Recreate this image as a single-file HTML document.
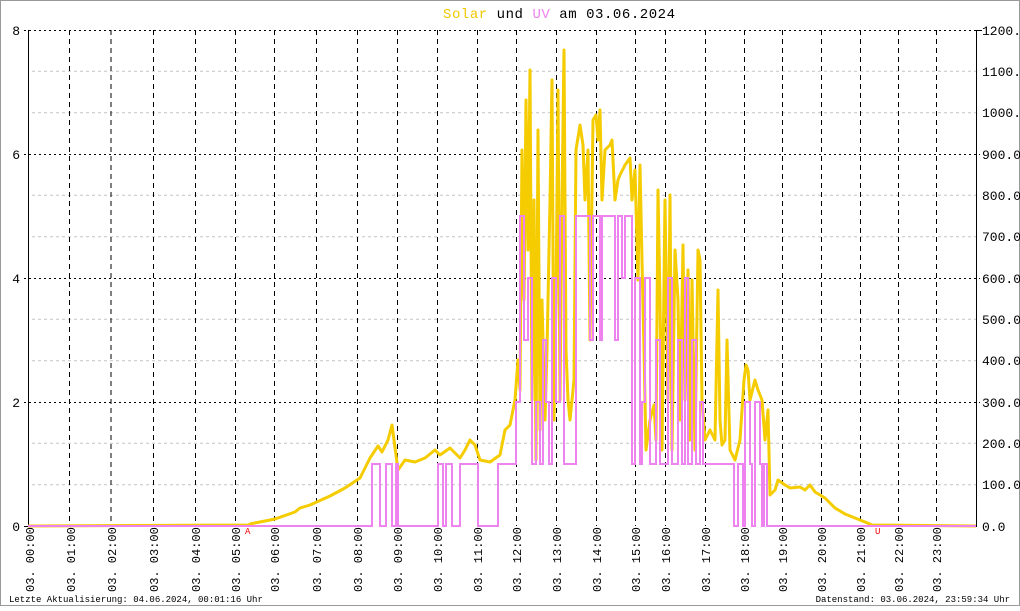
<!DOCTYPE html><html><head><style>
body{margin:0;width:1020px;height:606px;background:#fff;overflow:hidden}
svg text{font-family:"Liberation Mono",monospace}
</style></head><body>
<svg width="1020" height="606" xmlns="http://www.w3.org/2000/svg">
<rect x="0.5" y="0.5" width="1019" height="605" fill="#fff" stroke="#999"/>
<text x="443" y="18" font-size="14" textLength="232" lengthAdjust="spacing"><tspan fill="#f0c800">Solar</tspan> und <tspan fill="#ee82ee">UV</tspan> am 03.06.2024</text>
<g stroke="#c4c4c4" stroke-dasharray="3,3">
<line x1="32" y1="71.3" x2="976" y2="71.3"/><line x1="32" y1="112.7" x2="976" y2="112.7"/><line x1="32" y1="195.3" x2="976" y2="195.3"/><line x1="32" y1="236.7" x2="976" y2="236.7"/><line x1="32" y1="319.3" x2="976" y2="319.3"/><line x1="32" y1="360.7" x2="976" y2="360.7"/><line x1="32" y1="443.3" x2="976" y2="443.3"/><line x1="32" y1="484.7" x2="976" y2="484.7"/>
</g>
<g stroke="#000" stroke-dasharray="2,3">
<line x1="24" y1="30.5" x2="980" y2="30.5"/><line x1="24" y1="154.5" x2="980" y2="154.5"/><line x1="24" y1="278.5" x2="980" y2="278.5"/><line x1="24" y1="402.5" x2="980" y2="402.5"/>
</g>
<g stroke="#000" stroke-dasharray="5,4">
<line x1="69.5" y1="30" x2="69.5" y2="526"/><line x1="111" y1="30" x2="111" y2="526"/><line x1="153.5" y1="30" x2="153.5" y2="526"/><line x1="195.5" y1="30" x2="195.5" y2="526"/><line x1="235.5" y1="30" x2="235.5" y2="526"/><line x1="274.5" y1="30" x2="274.5" y2="526"/><line x1="316.5" y1="30" x2="316.5" y2="526"/><line x1="357.5" y1="30" x2="357.5" y2="526"/><line x1="397.5" y1="30" x2="397.5" y2="526"/><line x1="437.5" y1="30" x2="437.5" y2="526"/><line x1="477.5" y1="30" x2="477.5" y2="526"/><line x1="516.5" y1="30" x2="516.5" y2="526"/><line x1="556.5" y1="30" x2="556.5" y2="526"/><line x1="596.5" y1="30" x2="596.5" y2="526"/><line x1="635.5" y1="30" x2="635.5" y2="526"/><line x1="665.5" y1="30" x2="665.5" y2="526"/><line x1="705.5" y1="30" x2="705.5" y2="526"/><line x1="744.5" y1="30" x2="744.5" y2="526"/><line x1="782.5" y1="30" x2="782.5" y2="526"/><line x1="821.5" y1="30" x2="821.5" y2="526"/><line x1="860.5" y1="30" x2="860.5" y2="526"/><line x1="898.5" y1="30" x2="898.5" y2="526"/><line x1="936.5" y1="30" x2="936.5" y2="526"/>
</g>
<line x1="28.5" y1="30" x2="28.5" y2="527" stroke="#000"/>
<line x1="976.5" y1="30" x2="976.5" y2="527" stroke="#000"/>
<g stroke="#000"><line x1="24" y1="526.5" x2="28" y2="526.5"/><line x1="976" y1="30.5" x2="982" y2="30.5"/></g>
<g font-size="13" fill="#000" text-anchor="end"><text x="20" y="35">8</text><text x="20" y="159">6</text><text x="20" y="283">4</text><text x="20" y="407">2</text><text x="20" y="531">0</text></g>
<g font-size="13" fill="#000"><text x="982" y="35">1200.0</text><text x="982" y="76">1100.0</text><text x="982" y="117">1000.0</text><text x="982" y="159">900.0</text><text x="982" y="200">800.0</text><text x="982" y="241">700.0</text><text x="982" y="283">600.0</text><text x="982" y="324">500.0</text><text x="982" y="365">400.0</text><text x="982" y="407">300.0</text><text x="982" y="448">200.0</text><text x="982" y="489">100.0</text><text x="982" y="531">0.0</text></g>
<polyline fill="none" stroke="#f5cc00" stroke-width="3" stroke-linejoin="round" points="28,526 250,525 250,524 275,519 295,512 300,508 310,505 330,496 345,488 360,478 370,458 378,446 382,452 388,440 392,425 398,470 405,460 415,462 425,458 435,450 440,455 450,448 460,458 465,450 470,440 475,445 480,460 490,462 500,455 505,430 510,425 515,400 518,360 520,390 522,150 524,300 526,100 528,250 530,70 532,400 534,200 536,460 538,130 540,430 542,300 545,420 547,350 550,200 552,80 554,420 556,300 558,90 560,400 562,200 564,50 566,350 568,400 570,420 574,380 576,150 580,125 583,145 585,200 588,150 590,340 593,120 596,115 598,140 600,110 602,200 605,150 610,145 612,140 615,200 618,180 620,175 625,165 630,158 632,200 635,170 638,280 640,165 642,260 644,350 646,450 650,420 654,405 656,440 658,190 660,300 662,450 665,200 668,400 670,195 672,450 675,250 678,300 680,420 683,245 685,400 688,270 690,440 692,280 695,450 698,250 700,260 702,400 705,440 710,430 715,440 718,290 720,420 722,445 725,440 727,340 730,450 735,460 740,440 744,380 746,365 748,370 750,400 755,380 758,390 762,400 765,440 768,410 770,495 775,490 778,480 785,485 790,488 800,487 805,490 810,485 815,492 825,498 835,508 845,514 855,518 865,522 872,525 976,526"/>
<polyline fill="none" stroke="#ee82ee" stroke-width="2" points="28,526 372,526 372,464 380,464 380,526 386,526 386,464 392,464 392,526 396,526 396,464 398,464 398,526 438,526 438,464 443,464 443,526 446,526 446,464 452,464 452,526 460,526 460,464 478,464 478,526 498,526 498,464 516,464 516,402 520,402 520,216 524,216 524,340 528,340 528,278 532,278 532,464 536,464 536,402 540,402 540,464 543,464 543,340 546,340 546,402 549,402 549,464 552,464 552,278 556,278 556,402 560,402 560,216 564,216 564,464 576,464 576,216 590,216 590,340 593,340 593,216 600,216 600,340 602,340 602,216 615,216 615,340 618,340 618,216 622,216 622,278 625,278 625,216 632,216 632,464 635,464 635,278 640,278 640,464 642,464 642,402 645,402 645,278 650,278 650,464 656,464 656,340 660,340 660,464 668,464 668,278 672,278 672,464 678,464 678,340 682,340 682,464 685,464 685,278 688,278 688,464 692,464 692,340 696,340 696,464 700,464 700,402 703,402 703,464 734,464 734,526 738,526 738,464 743,464 743,526 745,526 745,402 750,402 750,464 752,464 752,526 755,526 755,402 760,402 760,464 762,464 762,526 764,526 764,464 767,464 767,526 976,526"/>
<text x="245" y="534" font-size="9" fill="#e00">A</text>
<text x="875" y="534" font-size="9" fill="#e00">U</text>
<g font-size="12" fill="#000">
<text transform="translate(34,592) rotate(-90)">03. 00:00</text><text transform="translate(75,592) rotate(-90)">03. 01:00</text><text transform="translate(116,592) rotate(-90)">03. 02:00</text><text transform="translate(158,592) rotate(-90)">03. 03:00</text><text transform="translate(200,592) rotate(-90)">03. 04:00</text><text transform="translate(240,592) rotate(-90)">03. 05:00</text><text transform="translate(279,592) rotate(-90)">03. 06:00</text><text transform="translate(321,592) rotate(-90)">03. 07:00</text><text transform="translate(362,592) rotate(-90)">03. 08:00</text><text transform="translate(402,592) rotate(-90)">03. 09:00</text><text transform="translate(442,592) rotate(-90)">03. 10:00</text><text transform="translate(482,592) rotate(-90)">03. 11:00</text><text transform="translate(521,592) rotate(-90)">03. 12:00</text><text transform="translate(561,592) rotate(-90)">03. 13:00</text><text transform="translate(601,592) rotate(-90)">03. 14:00</text><text transform="translate(640,592) rotate(-90)">03. 15:00</text><text transform="translate(670,592) rotate(-90)">03. 16:00</text><text transform="translate(710,592) rotate(-90)">03. 17:00</text><text transform="translate(749,592) rotate(-90)">03. 18:00</text><text transform="translate(787,592) rotate(-90)">03. 19:00</text><text transform="translate(826,592) rotate(-90)">03. 20:00</text><text transform="translate(865,592) rotate(-90)">03. 21:00</text><text transform="translate(903,592) rotate(-90)">03. 22:00</text><text transform="translate(941,592) rotate(-90)">03. 23:00</text>
</g>
<text x="9" y="602" font-size="9" fill="#000">Letzte Aktualisierung: 04.06.2024, 00:01:16 Uhr</text>
<text x="1010" y="602" font-size="9" fill="#000" text-anchor="end">Datenstand: 03.06.2024, 23:59:34 Uhr</text>
</svg>
</body></html>
